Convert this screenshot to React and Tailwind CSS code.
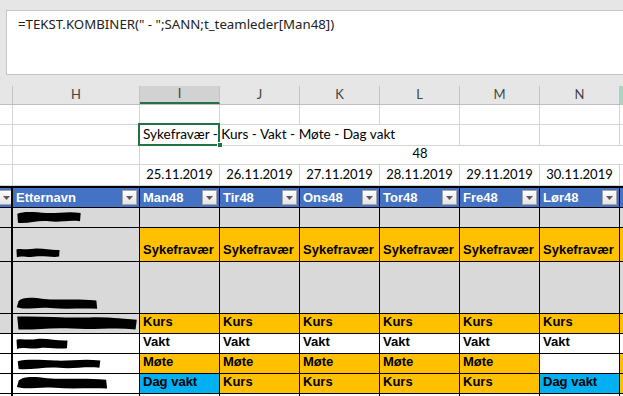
import React from 'react'

const COLS = ['I', 'J', 'K', 'L', 'M', 'N']
const DATES = ['25.11.2019', '26.11.2019', '27.11.2019', '28.11.2019', '29.11.2019', '30.11.2019']
const HEADS = ['Man48', 'Tir48', 'Ons48', 'Tor48', 'Fre48', 'Lør48']

const OR = 'bg-[#ffc000]'
const GR = 'bg-[#d9d9d9]'
const WH = 'bg-white'
const BL = 'bg-[#00b0f0]'

// table body: [height, g/h background, blob, cells (I..N), column O]
const ROWS = [
  { h: 'h-[20px]', side: GR, blob: { w: 66, h: 15, v: 0 }, cells: Array(6).fill([GR, '']), o: GR },
  { h: 'h-[34px]', side: GR, blob: { w: 44, h: 12, v: 1 }, cells: Array(6).fill([OR, 'Sykefravær']), o: OR },
  { h: 'h-[52px]', side: GR, blob: { w: 82, h: 15, v: 2 }, cells: Array(6).fill([GR, '']), o: GR },
  { h: 'h-[20px]', side: GR, blob: { w: 122, h: 16, v: 3 }, cells: Array(6).fill([OR, 'Kurs']), o: OR },
  { h: 'h-[20px]', side: WH, blob: { w: 52, h: 14, v: 1 }, cells: Array(6).fill([WH, 'Vakt']), o: WH },
  { h: 'h-[20px]', side: WH, blob: { w: 86, h: 13, v: 0 }, cells: [...Array(5).fill([OR, 'Møte']), [WH, '']], o: OR },
  { h: 'h-[20px]', side: WH, blob: { w: 92, h: 16, v: 2 }, cells: [[BL, 'Dag vakt'], ...Array(4).fill([OR, 'Kurs']), [BL, 'Dag vakt']], o: OR },
  { h: 'h-[20px]', side: WH, blob: null, cells: Array(6).fill([WH, '']), o: WH },
]

const BLOBS = [
  'M2,5 C12,1 30,3 46,4 C62,5 78,1 98,4 L97,15 C80,13 66,17 50,15 C34,13 16,19 3,17 Z',
  'M1,4 C10,2 24,5 40,3 C58,1 80,6 99,5 L98,16 C82,18 62,14 44,16 C28,18 12,14 2,17 Z',
  'M3,7 C8,1 20,2 34,4 C52,6 72,3 98,6 L99,17 C78,16 60,18 42,16 C26,14 12,19 1,15 Z',
  'M1,2 C20,1 40,4 60,3 C75,2 88,5 99,6 L98,18 C80,15 64,19 46,17 C30,15 14,19 2,18 Z',
]

function Blob({ w, h, v }) {
  return (
    <svg width={w} height={h} viewBox="0 0 100 20" preserveAspectRatio="none" className="block">
      <path d={BLOBS[v]} fill="#000" />
    </svg>
  )
}

function Dropdown() {
  return (
    <div className="w-[15px] h-[15px] border border-[#a6a6a6] bg-gradient-to-b from-white to-[#e4e4e4] flex items-center justify-center shrink-0">
      <svg width="7" height="4" viewBox="0 0 7 4">
        <path d="M0,0 L7,0 L3.5,4 Z" fill="#595959" />
      </svg>
    </div>
  )
}

const grid = 'border-r border-b border-[#d4d4d4]'
const tb = 'border-r border-b border-black'

export default function App() {
  return (
    <div className="w-[623px] h-[396px] overflow-hidden bg-[#e6e6e6] font-['Lato',sans-serif] text-[13px] text-black">
      {/* formula bar */}
      <div className="pt-[10px] pl-[6px] h-[86px]">
        <div className="h-[65px] bg-white border border-r-0 border-[#c6c6c6] pl-[11px] pt-[4px] font-['Noto_Sans',sans-serif] text-[13.25px] text-[#222] whitespace-nowrap">
          =TEKST.KOMBINER(" - ";SANN;t_teamleder[Man48])
        </div>
      </div>

      {/* column letters */}
      <div className="flex h-[19px] bg-[#e6e6e6] border-b border-[#bdbdbd] text-[13px] text-[#444]">
        <div className="w-[13px] shrink-0 border-r border-[#c4c4c4]" />
        <div className="w-[127px] shrink-0 border-r border-[#c4c4c4] flex items-center justify-center">H</div>
        {COLS.map((c) => (
          <div
            key={c}
            className={
              c === 'I'
                ? 'w-[80px] shrink-0 bg-[#d2d2d2] border-r border-[#c4c4c4] border-b-2 border-b-[#217346] flex items-center justify-center'
                : 'w-[80px] shrink-0 border-r border-[#c4c4c4] flex items-center justify-center'
            }
          >
            {c}
          </div>
        ))}
        <div className="w-[80px] shrink-0 bg-[#a9d6bc]" />
      </div>

      <div className="bg-white">
        {/* row 1 */}
        <div className="flex h-[20px]">
          <div className={`w-[13px] shrink-0 ${grid}`} />
          <div className={`w-[127px] shrink-0 ${grid}`} />
          {COLS.map((c) => (
            <div key={c} className={`w-[80px] shrink-0 ${grid}`} />
          ))}
          <div className={`w-[80px] shrink-0 ${grid}`} />
        </div>

        {/* row 2 */}
        <div className="flex h-[21px]">
          <div className={`w-[13px] shrink-0 ${grid}`} />
          <div className={`w-[127px] shrink-0 ${grid}`} />
          <div className={`relative w-[320px] shrink-0 ${grid} flex items-end pl-[3px] pb-[1px] text-[13.6px] whitespace-nowrap`}>
            Sykefravær - Kurs - Vakt - Møte - Dag vakt
            <div className="absolute left-[-2px] top-[-2px] w-[82px] h-[23px] border-2 border-[#217346]" />
            <div className="absolute left-[77px] top-[17px] w-[6px] h-[6px] bg-[#217346] border border-white" />
          </div>
          <div className={`w-[80px] shrink-0 ${grid}`} />
          <div className={`w-[80px] shrink-0 ${grid}`} />
          <div className={`w-[80px] shrink-0 ${grid}`} />
        </div>

        {/* row 3 */}
        <div className="flex h-[19px]">
          <div className={`w-[13px] shrink-0 ${grid}`} />
          <div className={`w-[127px] shrink-0 ${grid}`} />
          <div className="w-[480px] shrink-0 border-b border-[#d4d4d4] flex items-end pb-[1px]">
            <span className="w-[240px]" />
            <span className="w-[80px] text-center">48</span>
          </div>
          <div className={`w-[80px] shrink-0 ${grid}`} />
        </div>

        {/* row 4: dates */}
        <div className="flex h-[21px]">
          <div className={`w-[13px] shrink-0 ${grid}`} />
          <div className={`w-[127px] shrink-0 ${grid}`} />
          {DATES.map((d) => (
            <div key={d} className={`w-[80px] shrink-0 ${grid} flex items-end justify-center pb-[1px]`}>
              {d}
            </div>
          ))}
          <div className={`w-[80px] shrink-0 ${grid}`} />
        </div>

        {/* table */}
        <div className="border-t-2 border-black font-['Liberation_Sans',Arial,sans-serif] font-bold text-[13px]">
          <div className="flex h-[20px] bg-[#4472c4] text-white">
            <div className={`w-[13px] shrink-0 ${tb} border-r-2 overflow-hidden flex items-center justify-end pr-[1px]`}>
              <div className="-mr-[4px]">
                <Dropdown />
              </div>
            </div>
            <div className={`w-[127px] shrink-0 ${tb} flex items-center justify-between pl-[3px] pr-[2px]`}>
              <span>Etternavn</span>
              <Dropdown />
            </div>
            {HEADS.map((t) => (
              <div key={t} className={`w-[80px] shrink-0 ${tb} flex items-center justify-between pl-[3px] pr-[2px]`}>
                <span>{t}</span>
                <Dropdown />
              </div>
            ))}
            <div className={`w-[80px] shrink-0 ${tb}`} />
          </div>

          {ROWS.map((r, i) => (
            <div key={i} className={`flex ${r.h}`}>
              <div className={`w-[13px] shrink-0 ${tb} border-r-2 ${r.side}`} />
              <div className={`w-[127px] shrink-0 ${tb} ${r.side} flex items-end pl-[3px] pb-[2px]`}>
                {r.blob && <Blob {...r.blob} />}
              </div>
              {r.cells.map(([bg, t], j) => (
                <div key={j} className={`w-[80px] shrink-0 ${tb} ${bg} flex items-end pl-[3px] pb-[2px] whitespace-nowrap`}>
                  {t}
                </div>
              ))}
              <div className={`w-[80px] shrink-0 ${tb} ${r.o}`} />
            </div>
          ))}
        </div>
      </div>
    </div>
  )
}
